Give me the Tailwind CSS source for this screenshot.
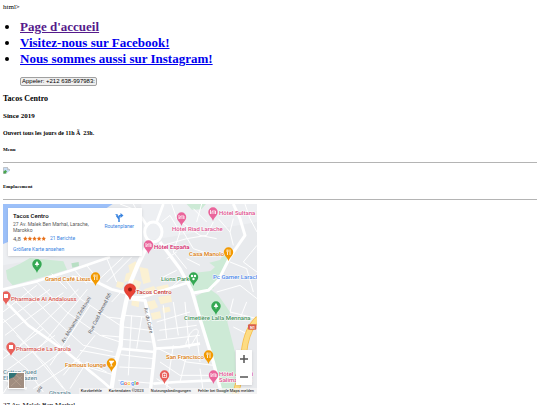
<!DOCTYPE html>
<html lang="fr">
<head>
    <meta charset="UTF-8">
    <meta name="viewport" content="width=device-width, initial-scale=1.0">
    <title>Tacos Centro</title>
    <script src="https://cdn.jsdelivr.net/npm/@tailwindcss/browser@4"></script>
</head>
<body class="bg-white text-black overflow-x-hidden px-[3px] pt-[3px] font-['Liberation_Serif',serif] text-[7px] leading-[8px]">
    <p>html&gt;</p>

    <ul class="mt-2 pl-[17px] list-disc text-[13px] leading-4 font-bold">
        <li><a href="#" class="underline text-[#551a8b]">Page d'accueil</a></li>
        <li><a href="#facebook" class="underline text-[#0000ee]">Visitez-nous sur Facebook!</a></li>
        <li><a href="#instagram" class="underline text-[#0000ee]">Nous sommes aussi sur Instagram!</a></li>
    </ul>
    <div class="mt-[10px] pl-[17px] flex">
        <button type="button" class="h-[9px] px-[1px] border border-[#a0a0a0] rounded-[2px] bg-[#efefef] font-['Liberation_Sans',sans-serif] text-[6px] leading-[7px]">Appeler: +212 638-997983:</button>
    </div>

    <h2 class="mt-2 text-[8px] leading-[10px] font-bold">Tacos Centro</h2>
    <h3 class="mt-[7px] text-[7px] leading-[10px] font-bold">Since 2019</h3>
    <h4 class="mt-2 text-[6px] leading-2 font-bold">Ouvert tous les jours de 11h Ã&nbsp; 23h.</h4>
    <h5 class="mt-[9px] text-[5px] leading-2 font-bold">Menu</h5>
    <hr class="mt-2 border-[#b4b4b4]">

    <!-- missing menu picture -->
    <svg class="mt-1 w-[7px] h-[7px]" viewBox="0 0 14 14" role="img" aria-label="Menu">
        <path d="M1 1h8l4 4v8H1z" fill="#c6dcf5" stroke="#9a9a9a"/>
        <path d="M9 1v4h4" fill="#fff" stroke="#9a9a9a"/>
        <path d="M1 13V9l4-3 3 3-3 4z" fill="#4aa54b"/>
        <path d="M6 14l8-7v7z" fill="#fff"/>
    </svg>

    <h5 class="mt-[9px] text-[5px] leading-2 font-bold">Emplacement</h5>
    <hr class="mt-2 border-[#b4b4b4]">

    <div class="relative mt-1 w-[254px] h-[190px] overflow-hidden font-[Roboto,sans-serif]">
        <svg class="block w-full h-full" viewBox="0 0 254 190">
            <defs>
                <path id="pin" d="M0 8C-1 4-4.700 3-4.700-1A4.700 4.700 0 0 1 4.700-1C4.700 3 1 4 0 8z"/>
                <g id="bed" fill="none" stroke="#fff" stroke-width=".8"><path d="M-2.500-3v4M-2.500 0h5v1M-.8-.8V-2h3.300v2"/></g>
                <path id="fork" d="M-1.500-3.500v2.500M-.5-3.500v2.500M-1-1v3M1.500-3.500v5.500" fill="none" stroke="#fff" stroke-width=".8"/>
                <path id="tree" d="M0-4L2.300 0H.5v1.500h-1V0h-1.800z" fill="#fff"/>
            </defs>
            <rect width="254" height="190" fill="#e8eaed"/>

            <g transform="translate(-3 -2) scale(.33333)">
                <!-- sea and parks -->
                <path d="M9 126L24 120V165H424V6H771V60L9 190z" fill="#edeff2"/>
                <path d="M9 6H338L320 18H24V120L9 126z" fill="#9cc0f9"/>
                <path d="M18 205L60 185 90 168 190 178 201 203 150 219 38 250 22 232z" fill="#cdead6"/>
                <path d="M214 184L236 180 237 192 217 197z" fill="#b8dfc4"/>
                <path d="M560 6H618L604 22 576 23z" fill="#cdead6"/>

                <!-- commercial blocks -->
                <g fill="#fbf1d3">
                    <path d="M385 190l22-12 8 12-24 30z M378 215l20-8 -6 28-20 6z M352 238l22 4-8 18-18-6z"/>
                    <path d="M418 195l26 5 8 40-22 6-6-22z M400 230l24 10-8 24-22-8z M432 262l30-10 12 20-32 14z"/>
                    <path d="M468 255l36-8 6 22-30 10z M474 285l38-6 4 20-34 8z M440 300l24-6 10 22-22 8z M452 334l28-6 4 20-26 6z M396 292l22 6-2 18-22-6z M486 318l22-4 4 14-22 6z"/>
                </g>

                <!-- side streets -->
                <g fill="none" stroke="#fff" stroke-width="3">
                    <path d="M9 330L110 250M9 362L150 262M15 400L190 272M60 430L235 262M105 455L262 262M150 490L270 310M190 520L285 400M9 470L130 380M20 505L165 400M60 540L210 430M100 560L240 470"/>
                    <path d="M15 268L80 330 190 440 280 520M70 255L150 340 250 430 340 450M110 240L200 330 300 400 360 420M9 350L90 440 190 560M9 440L80 500 130 570M190 225L240 290 360 370M50 400L140 490 200 570"/>
                    <path d="M155 215L200 260M225 205L260 245M260 190L300 240M320 168L350 240M9 575L50 510M210 560L260 480 320 510M240 445L350 465M230 485L345 520M300 230L370 165M320 240L395 165M335 300L372 260M320 345L365 350M305 400L362 405"/>
                    <path d="M375 340L435 345M370 375L450 385M368 412L455 420M362 458L462 470M358 495L462 500M395 340L385 520M425 345L410 440M355 535L470 545"/>
                    <path d="M470 360L570 330M478 385L590 370M472 415L600 400M490 310L500 410M520 300L535 400M555 300L568 440M475 440L560 480 640 490M480 480L540 520 650 520M520 430L500 560M560 460L540 540M590 400L600 480M470 530L530 570M600 500L610 570"/>
                    <path d="M485 60L510 40 540 90 520 150 560 200M515 6L530 50 600 100 650 110M550 90L580 140 640 160M605 6L590 60M490 130L560 110 620 100 640 60M500 170L530 150M545 230L510 260 450 270M530 205L480 230M620 60L580 20M560 170L600 190M655 50L690 90 700 130M700 50L690 90M735 6L750 50 771 90M771 130L730 180 771 210M690 180L740 200 760 270M650 270L720 250 771 290M700 290L690 330 771 350M740 300L720 350M700 375L750 400M424 50L400 6M360 6L424 30"/>
                    <path d="M570 395c20-25 30-10 22 4l-18 30c-6 12-22 4-14-10z"/>
                </g>

                <!-- central park and cemetery -->
                <path d="M580 213L632 207 645 195 628 182 660 174 675 148 694 152 680 185 655 230 640 260 583 273 570 245z" fill="#cdead6"/>
                <path d="M588 282L630 262 655 280 690 330 682 360 705 450 710 576H668L640 480 600 340z" fill="#cdead6"/>

                <!-- main streets -->
                <g fill="none" stroke="#fff" stroke-linejoin="round">
                    <path d="M9 262L110 238 220 203 330 165" stroke-width="8"/>
                    <path d="M9 290L85 370 200 450 310 540 350 576" stroke-width="8"/>
                    <path d="M215 225L290 240 335 262 385 275" stroke-width="9"/>
                    <path d="M444 125L415 185 392 240 378 300 366 360 362 430 345 490 332 576" stroke-width="13"/>
                    <path d="M385 290L435 295 450 360 465 440 460 490 450 576" stroke-width="10"/>
                    <path d="M390 285L430 285 500 262 570 240" stroke-width="8"/>
                    <path d="M480 120L540 200 575 265 600 350 640 480 665 576" stroke-width="10"/>
                    <path d="M580 273L625 265 655 235 690 165 735 100 720 50 700 6" stroke-width="9"/>
                    <path d="M465 440L540 435 600 425M358 440L465 450M460 545L530 540 640 535" stroke-width="8"/>
                    <ellipse cx="460" cy="90" rx="26" ry="30" stroke-width="9"/>
                    <path d="M440 70L424 45M470 60L490 6M9 530L80 560" stroke-width="8"/>
                </g>
                <path d="M775 350Q740 380 732 450T705 580" fill="none" stroke="#f5bd4c" stroke-width="19"/>
                <path d="M775 350Q740 380 732 450T705 580" fill="none" stroke="#fddc83" stroke-width="14"/>
                <rect x="744" y="367" width="25" height="16" rx="3" fill="#d9604c"/>
            </g>
            <text x="247" y="125" font-size="4" font-weight="700" fill="#fff">N1</text>

            <!-- street names -->
            <g font-size="5" fill="#5f6368">
                <text transform="translate(61 139) rotate(-59)">Av. Mohamed Zerktouni</text>
                <text transform="translate(88 130) rotate(-63)">Rue Caid Ahmed Rifi</text>
                <text transform="translate(141 104) rotate(77)">Av. du Caire</text>
                <text transform="translate(36 189) rotate(-60)">sra</text>
            </g>

            <!-- pins -->
            <g transform="translate(178.500 14)"><use href="#pin" fill="#ea659b"/><use href="#bed"/></g>
            <g transform="translate(210 9)"><use href="#pin" fill="#ea659b"/><use href="#bed"/></g>
            <g transform="translate(145.500 42)"><use href="#pin" fill="#ea659b"/><use href="#bed"/></g>
            <g transform="translate(210.500 172)"><use href="#pin" fill="#ea659b"/><use href="#bed"/></g>
            <g transform="translate(92.500 74)"><use href="#pin" fill="#f29900"/><use href="#fork"/></g>
            <g transform="translate(225.500 49)"><use href="#pin" fill="#f29900"/><use href="#fork"/></g>
            <g transform="translate(205.500 152)"><use href="#pin" fill="#f29900"/><use href="#fork"/></g>
            <g transform="translate(108.500 160)"><use href="#pin" fill="#f29900"/><path d="M-2.500-3h5L0 0v2M-1.500 2h3" fill="#fff" stroke="#fff" stroke-width=".6"/></g>
            <g transform="translate(34 61)"><use href="#pin" fill="#34a853"/><use href="#tree"/></g>
            <g transform="translate(213 103)"><use href="#pin" fill="#34a853"/><use href="#tree"/></g>
            <g transform="translate(190.500 74)"><use href="#pin" fill="#34a853"/><g fill="#fff"><circle cx="-1.500" cy="-2" r="1.200"/><circle cx="1.500" cy="-2" r="1.200"/><circle cy="1" r="1.200"/></g></g>
            <g transform="translate(3 93)"><use href="#pin" fill="#e8605a"/><path d="M-2-3h4v4h-4z" fill="#fff"/></g>
            <g transform="translate(8 144)"><use href="#pin" fill="#e8605a"/><path d="M-2-3h4v4h-4z" fill="#fff"/></g>
            <g transform="translate(161.500 172)"><use href="#pin" fill="#e8605a"/><path d="M-2-2.500h4v4h-4zM-1-3.500h2M0-1.500v2M-1-.5h2" fill="none" stroke="#fff" stroke-width=".7"/></g>
            <path d="M127 95.500C126 91 121.300 90 121.300 85.200a5.700 5.500 0 0 1 11.400 0C132.700 90 128 91 127 95.500z" fill="#ea4335" stroke="#c5221f" stroke-width=".5"/>
            <circle cx="127" cy="85.500" r="2" fill="#8c1a11"/>

            <!-- place names -->
            <g font-size="6" font-weight="500" stroke="#fff" stroke-width="1" paint-order="stroke" stroke-linejoin="round">
                <g fill="#dd4f8c">
                    <text x="169" y="27">Hôtel Riad Larache</text>
                    <text x="216" y="11">Hôtel Sultana Inn</text>
                    <text x="151" y="45" fill="#d01867">Hôtel España</text>
                    <text x="216" y="172">Hôtel Assaui</text>
                    <text x="216" y="178">Salima Loco</text>
                </g>
                <g fill="#d87a0c">
                    <text x="42" y="77">Grand Café Lixus</text>
                    <text x="186" y="52">Casa Manolo</text>
                    <text x="62" y="163">Famous lounge</text>
                    <text x="163" y="155">San Francisco</text>
                </g>
                <g fill="#3f9159">
                    <text x="158" y="77">Lions Park</text>
                    <text x="181" y="116">Cimetière Lalla Mennana</text>
                </g>
                <g fill="#d4514b">
                    <text x="8" y="97">Pharmacie Al Andalouss</text>
                    <text x="13" y="147">Pharmacie La Farola</text>
                    <text x="133" y="90" fill="#c5322b">Tacos Centro</text>
                </g>
                <text x="210" y="75" fill="#4a86e8">Pc Gamer Larache</text>
                <g fill="#638a99">
                    <text x="0" y="170">Cotton Oued</text>
                    <text x="0" y="176">El Makhazen</text>
                    <text x="46" y="191">Ghazala</text>
                </g>
            </g>
            <text x="117" y="181" font-size="6" font-weight="500" stroke="#fff" stroke-width="1" paint-order="stroke"><tspan fill="#4285f4">G</tspan><tspan fill="#ea4335">o</tspan><tspan fill="#fbbc04">o</tspan><tspan fill="#4285f4">g</tspan><tspan fill="#34a853">l</tspan><tspan fill="#ea4335">e</tspan></text>
        </svg>

        <!-- place card -->
        <div class="absolute left-[5px] top-1 w-[134px] h-12 flex justify-between bg-white shadow-sm pl-[5px] pr-2 pt-1 text-[5px] leading-[6px] text-[#5b5b5b]">
            <div>
                <h6 class="text-[6px] leading-2 font-medium text-black">Tacos Centro</h6>
                <p class="mt-[1px] w-20">27 Av. Malek Ben Marhal, Larache, Marokko</p>
                <p class="mt-[2px] flex items-center gap-[2px] leading-[7px]">
                    <span class="text-[6px]">4,8</span>
                    <svg class="w-[23px] h-[5px]" viewBox="0 0 50 10" fill="#e7711b">
                        <path id="star" d="M5 0l1.500 3.400 3.500.4-2.600 2.400.7 3.600L5 8 1.900 9.800l.7-3.600L0 3.800l3.500-.4z"/>
                        <use href="#star" x="10"/><use href="#star" x="20"/><use href="#star" x="30"/><use href="#star" x="40"/>
                    </svg>
                    <a href="#berichte" class="ml-[2px] text-[#3a84df]">21 Berichte</a>
                </p>
                <a href="#karte" class="mt-1 block text-[#3a84df]">Größere Karte ansehen</a>
            </div>
            <a href="#route" class="pt-[1px] flex flex-col items-center text-[#3a84df]">
                <svg class="w-[9px] h-[9px] mb-[1px]" viewBox="0 0 18 18" fill="none" stroke="#3a84df" stroke-width="3">
                    <path d="M8 18v-6L3 5M8 13V8q0-3 4-3"/>
                    <path d="M11 0l6 5-6 5zM0 3l5-1 1 5z" fill="#3a84df" stroke="none"/>
                </svg>
                Routenplaner
            </a>
        </div>

        <!-- satellite switch -->
        <button type="button" aria-label="Satellit" class="absolute left-[5px] bottom-[5px] w-[17px] h-[17px] border border-white shadow-sm bg-[#a08d80]">
            <svg class="block w-full h-full" viewBox="0 0 15 15">
                <path d="M0 0h8L5 4 0 6z" fill="#2f7477"/>
                <path d="M2 13L13 3M4 5l8 8M7 2l6 5" stroke="#b9a594" stroke-width=".7"/>
            </svg>
        </button>

        <!-- zoom -->
        <div class="absolute right-[5px] bottom-[9px] w-4 flex flex-col bg-white shadow-sm">
            <button type="button" aria-label="Vergrößern" class="h-[18px] flex items-center justify-center"><svg class="w-2 h-2" viewBox="0 0 8 8"><path d="M4 0v8M0 4h8" stroke="#555" stroke-width="1.500"/></svg></button>
            <button type="button" aria-label="Verkleinern" class="h-[17px] flex items-center justify-center"><svg class="w-2 h-2" viewBox="0 0 8 8"><path d="M0 4h8" stroke="#555" stroke-width="1.500"/></svg></button>
        </div>

        <div class="absolute right-0 bottom-0 flex gap-[7px] pl-[2px] pr-[3px] bg-[#f5f5f5]/80 text-[4px] leading-[6px] text-black whitespace-nowrap">
            <button type="button">Kurzbefehle</button>
            <span>Kartendaten ©2023</span>
            <a href="#terms">Nutzungsbedingungen</a>
            <a href="#report">Fehler bei Google Maps melden</a>
        </div>
    </div>

    <p class="mt-[7px]">27 Av. Malek Ben Marhal</p>
</body>
</html>
